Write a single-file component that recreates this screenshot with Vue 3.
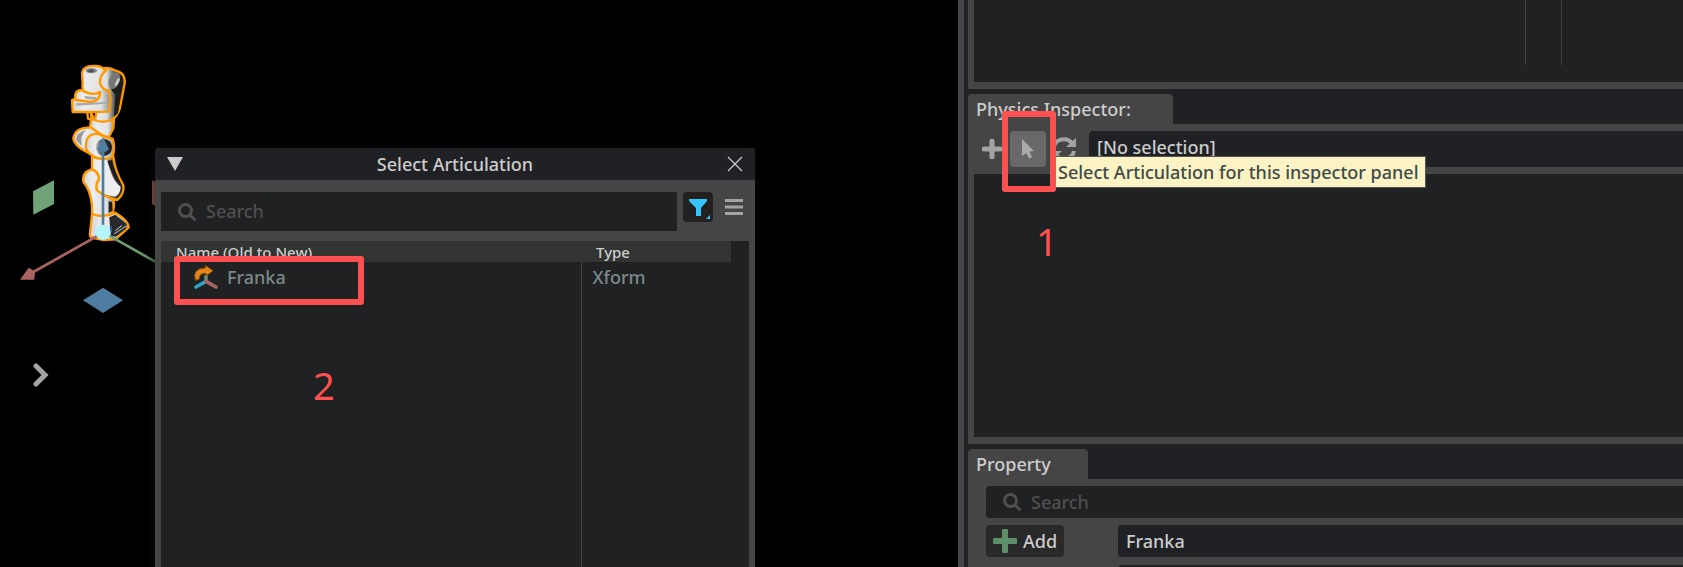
<template>
  <div class="app">
    <main class="viewport">
      <svg class="scene" viewBox="0 0 540 870" aria-hidden="true">
        <defs>
          <linearGradient id="shell" x1="0" x2="1">
            <stop offset="0" stop-color="#d4d4d4" />
            <stop offset="0.3" stop-color="#ececec" />
            <stop offset="0.75" stop-color="#e2e2e2" />
            <stop offset="1" stop-color="#8a8a8a" />
          </linearGradient>
          <linearGradient id="shade" x1="0" x2="1">
            <stop offset="0" stop-color="#eee" />
            <stop offset="0.4" stop-color="#ddd" />
            <stop offset="0.7" stop-color="#444" />
            <stop offset="1" stop-color="#151515" />
          </linearGradient>
          <linearGradient id="joint" x1="0" x2="1">
            <stop offset="0" stop-color="#b5b5b5" />
            <stop offset="0.5" stop-color="#333" />
            <stop offset="1" stop-color="#1a1a1a" />
          </linearGradient>
        </defs>

        <!-- robot arm, top to base -->
        <g stroke="#f90" stroke-width="7" stroke-linejoin="round" stroke-linecap="round">
          <path fill="url(#shade)" d="M298 88Q325 78 347 92Q376 98 374 130L362 192Q358 222 340 236L326 250L284 245L300 160Z" />
          <path fill="url(#shell)" d="M275 222L283 240Q312 252 342 236L340 265L326 292L296 282L270 264Z" />
          <path fill="url(#shell)" d="M318 92Q299 104 300 128Q304 148 326 152L332 172L328 215L264 216L218 216L216 180L226 176Q222 150 246 150L252 154Q246 148 248 130L246 98Q250 74 290 78Q308 80 318 92Z" />
          <path fill="none" d="M252 154Q280 168 300 156Q302 182 272 186L228 180M262 218L264 236L276 240L272 216" />
          <path fill="url(#shell)" d="M272 262Q224 262 220 296Q224 322 274 342L300 342L310 288Z" />
          <path fill="url(#shell)" d="M296 282Q262 278 258 310Q254 334 276 346Q306 366 338 352Q346 320 338 296Q316 294 296 282Z" />
          <path fill="url(#shade)" d="M276 350L276 388Q298 396 296 420Q284 432 290 450Q318 474 352 480Q374 460 370 436Q344 392 340 350Q310 364 276 350Z" />
          <path fill="url(#shell)" d="M276 388Q246 394 250 426Q272 450 276 498L276 522Q310 536 336 522Q346 496 340 478Q310 468 290 450Q286 432 296 420Q298 396 276 388Z" />
          <path fill="url(#shell)" d="M276 522L270 580Q266 592 282 594L312 600L346 598L386 562Q386 542 346 518Q310 536 276 522Z" />
        </g>
        <path fill="#eee" d="M284 362L322 360Q334 420 362 440Q362 460 346 470Q316 466 296 450Q292 436 301 422Q304 396 284 384Z" />
        <path fill="#1c1c1c" d="M344 100Q368 106 368 132L354 220L342 230L346 164L334 150Z" />
        <ellipse cx="343" cy="122" rx="16" ry="26" fill="#777" transform="rotate(20 343 122)" />
        <ellipse cx="352" cy="126" rx="4" ry="13" fill="#ccc" transform="rotate(28 352 126)" />
        <ellipse cx="274" cy="92" rx="17" ry="8" fill="#80858b" />
        <ellipse cx="273" cy="93" rx="9" ry="4" fill="#4a4d50" />
        <path fill="#aaa" d="M228 190L318 186L318 191L228 197ZM252 168L290 172L288 179L258 177Z" />
        <path fill="#999" d="M258 270Q230 276 228 300L246 318Q238 288 258 270Z" />
        <ellipse cx="312" cy="322" rx="24" ry="26" fill="url(#joint)" />
        <path fill="#1c1c1c" d="M322 362L336 360Q344 396 364 432L352 424Q334 400 322 362ZM326 484L336 486L338 512L326 518Z" />
        <path fill="#26282b" d="M328 532L346 524L380 552L378 566L348 590L332 588Z" />
        <path stroke="#999" stroke-width="4" fill="none" d="M342 582L378 558" />
        <path stroke="#ccc" stroke-width="3" fill="none" d="M346 572L366 556" />
        <path stroke="#2b56b8" stroke-width="4" d="M334 558V576" />

        <!-- transform gizmo -->
        <path stroke="#a96262" stroke-width="8" d="M292 588L100 696" />
        <path fill="#a96262" d="M60 719L86 683L105 694L103 719Z" />
        <path stroke="#6d9c74" stroke-width="8" d="M326 586L480 673" />
        <path stroke="#4f7ca1" stroke-width="8" d="M309 330V560" />
        <path fill="#4f7ca1" d="M309 291L327 328Q309 346 291 328Z" />
        <circle cx="309" cy="577" r="23" fill="#b5f4f8" />
        <path fill="#71a378" d="M99 454L162 421V492L100 524Z" />
        <path fill="#a96262" d="M456 421L480 434V505L456 492Z" />
        <path fill="#4f7ca1" d="M309 743L369 781L309 819L249 781Z" />
      </svg>

      <button class="expander" aria-label="Expand toolbar">
        <svg viewBox="0 0 16 24"><path d="M3 3L12 12L3 21" fill="none" stroke="#a3a3a3" stroke-width="5" stroke-linecap="round" /></svg>
      </button>

      <section class="dialog" role="dialog" aria-labelledby="dialog-title">
        <header class="title-bar">
          <button class="icon-btn" aria-label="Collapse">
            <svg width="16" height="14" viewBox="0 0 16 14"><path d="M0 0H16L8 14Z" fill="#ccc" /></svg>
          </button>
          <h1 id="dialog-title">Select Articulation</h1>
          <button class="icon-btn" aria-label="Close">
            <svg width="16" height="16" viewBox="0 0 16 16"><path d="M1 1L15 15M15 1L1 15" stroke="#ccc" stroke-width="1.2" /></svg>
          </button>
        </header>

        <div class="dialog-body">
          <div class="filter-row">
            <label class="search dialog-search">
              <svg viewBox="0 0 18 18"><circle cx="7.5" cy="7.5" r="6" /><path d="M12 12L16.500 16.500" /></svg>
              <input v-model="primSearch" type="text" placeholder="Search" aria-label="Search prims">
            </label>
            <button class="filter-btn" aria-label="Filter">
              <svg viewBox="0 0 30 30">
                <path d="M6 7H24V9L18 16V24H13V16L6 9Z" fill="#34c5ff" />
                <path d="M27 23V27H23Z" fill="#34c5ff" />
              </svg>
            </button>
            <button class="icon-btn" aria-label="Options">
              <svg width="18" height="16" viewBox="0 0 18 16"><path d="M0 0H18V3H0ZM0 6.500H18V9.500H0ZM0 13H18V16H0Z" fill="#a3a3a3" /></svg>
            </button>
          </div>

          <div class="table-wrap">
            <table>
              <thead>
                <tr>
                  <th class="name-col">Name (Old to New)</th>
                  <th>Type</th>
                </tr>
              </thead>
              <tbody>
                <tr v-for="prim in filteredPrims" :key="prim.name" class="prim-row">
                  <td class="name-col">
                    <div class="prim-name">
                      <svg viewBox="0 0 72 72">
                        <path d="M36 49V30" stroke="#6d9c74" stroke-width="10" />
                        <path d="M36 49L6 66" stroke="#2fa3c2" stroke-width="11" stroke-linecap="round" />
                        <path d="M36 49L66 66" stroke="#a96262" stroke-width="11" stroke-linecap="round" />
                        <path d="M4 46Q-6 10 34 9V1L57 17L36 33V25Q16 23 15 43Z" fill="#e5861a" stroke="#8a4b08" stroke-width="3" />
                      </svg>
                      {{ prim.name }}
                    </div>
                    <span class="marker marker-row"></span>
                    <span class="step step-two">2</span>
                  </td>
                  <td>{{ prim.type }}</td>
                </tr>
                <tr>
                  <td></td>
                  <td></td>
                </tr>
              </tbody>
            </table>
          </div>
        </div>
      </section>
    </main>

    <aside class="sidebar">
      <section class="panel stage">
        <div class="stage-view">
          <span class="stage-line"></span>
          <span class="stage-line"></span>
        </div>
      </section>

      <section class="panel-group inspector">
        <h2 class="tab tab-wide">Physics Inspector:</h2>
        <div class="panel inspector-panel">
          <div class="toolbar">
            <button class="tool-btn" aria-label="Add inspector">
              <svg width="20" height="20" viewBox="0 0 20 20"><path d="M10 2V18M2 10H18" stroke="#a3a3a3" stroke-width="5" stroke-linecap="round" /></svg>
            </button>
            <div class="picker">
              <button class="tool-btn active" aria-describedby="picker-tip" aria-label="Select articulation">
                <svg width="14" height="20" viewBox="0 0 14 20"><path d="M1 0L13 12L8.500 12.500L11 18L8 19.500L5.500 14L1 17Z" fill="#aaa" /></svg>
              </button>
              <span id="picker-tip" class="tooltip" role="tooltip">Select Articulation for this inspector panel</span>
              <span class="marker marker-tool"></span>
              <span class="step step-one">1</span>
            </div>
            <button class="tool-btn" aria-label="Refresh">
              <svg width="24" height="24" viewBox="0 0 24 24">
                <path d="M2 10A10 9 0 0 1 20 6M22 14A10 9 0 0 1 4 18" fill="none" stroke="#a3a3a3" stroke-width="4" />
                <path d="M24 1V10H14ZM0 23V14H10Z" fill="#a3a3a3" />
              </svg>
            </button>
            <input v-model="selection" class="field selection" type="text" aria-label="Selection">
          </div>
          <div class="inspector-view"></div>
        </div>
      </section>

      <section class="panel-group property">
        <h2 class="tab">Property</h2>
        <div class="panel property-panel">
          <label class="search property-search">
            <svg viewBox="0 0 18 18"><circle cx="7.5" cy="7.5" r="6" /><path d="M12 12L16.500 16.500" /></svg>
            <input v-model="propertySearch" type="text" placeholder="Search" aria-label="Search properties">
          </label>
          <div class="property-grid">
            <button class="add-btn">
              <svg width="24" height="24" viewBox="0 0 24 24"><path d="M10 0H14Q15 0 15 1V9H23Q24 9 24 10V14Q24 15 23 15H15V23Q15 24 14 24H10Q9 24 9 23V15H1Q0 15 0 14V10Q0 9 1 9H9V1Q9 0 10 0Z" fill="#5f8f68" /></svg>
              Add
            </button>
            <input v-model="primName" class="field" type="text" aria-label="Prim name">
            <input v-model="primPath" class="field path-field" type="text" aria-label="Prim path">
          </div>
        </div>
      </section>
    </aside>
  </div>
</template>

<script setup>
import { computed, ref } from 'vue'

const prims = [{ name: 'Franka', type: 'Xform' }]

const primSearch = ref('')
const propertySearch = ref('')
const selection = ref('[No selection]')
const primName = ref('Franka')
const primPath = ref('')

const filteredPrims = computed(() =>
  prims.filter((prim) => prim.name.toLowerCase().includes(primSearch.value.toLowerCase()))
)
</script>

<style>
body {
  margin: 0;
  background: #000;
}
</style>

<style scoped>
* {
  box-sizing: border-box;
}
.app {
  display: grid;
  grid-template-columns: 958fr 725fr;
  height: 100vh;
  overflow: hidden;
  color: #ccc;
  font: 500 18px/24px "Noto Sans", sans-serif;
}
button,
input {
  margin: 0;
  padding: 0;
  border: 0;
  background: none;
  color: inherit;
  font: inherit;
}
input {
  min-width: 0;
  outline: none;
}
svg {
  display: block;
  flex: none;
}
h1,
h2 {
  margin: 0;
  font: inherit;
}

/* Viewport */
.viewport {
  position: relative;
  background: #000;
}
.scene {
  position: absolute;
  top: 40px;
  left: 0;
  width: 180px;
  height: 290px;
}
.expander {
  position: absolute;
  top: 363px;
  left: 33px;
}
.expander svg {
  width: 16px;
  height: 24px;
}

/* Select Articulation window */
.dialog {
  position: absolute;
  top: 148px;
  bottom: 0;
  left: 155px;
  display: flex;
  flex-direction: column;
  width: 600px;
  border-radius: 4px 4px 0 0;
  background: #454545;
  box-shadow: 0 0 16px #0a0a0a;
}
.title-bar {
  display: flex;
  align-items: center;
  justify-content: space-between;
  height: 32px;
  padding: 0 12px;
  border-radius: 4px 4px 0 0;
  background: #202125;
}
.dialog-body {
  flex: 1;
  display: flex;
  flex-direction: column;
  gap: 10px;
  padding: 12px 6px 0;
}
.filter-row {
  display: flex;
  align-items: flex-start;
  gap: 6px;
}
.filter-row .icon-btn {
  padding: 7px 6px;
}
.search {
  display: flex;
  align-items: center;
  gap: 10px;
  padding: 0 17px;
  background: #202123;
}
.search svg {
  width: 18px;
  height: 18px;
  fill: none;
  stroke: #4f4f4f;
  stroke-width: 3;
  stroke-linecap: round;
}
.search input {
  flex: 1;
}
.search input::placeholder {
  color: #4f4f4f;
  opacity: 1;
}
.dialog-search {
  flex: 1;
  height: 39px;
}
.dialog-search input {
  padding-bottom: 2px;
}
.filter-btn {
  border-radius: 4px;
  background: #22211f;
}
.filter-btn svg {
  width: 30px;
  height: 30px;
}
.table-wrap {
  flex: 1;
  padding-right: 18px;
  background: #202123;
}
table {
  width: 100%;
  height: 100%;
  table-layout: fixed;
  border-collapse: collapse;
  text-align: left;
}
th {
  height: 21px;
  padding: 1px 0 0 15px;
  background: #323432;
  font-size: 15px;
  font-weight: 500;
  line-height: 20px;
}
th.name-col {
  width: 420px;
}
td {
  position: relative;
  padding: 0 0 0 11px;
  color: #7b8989;
}
td + td {
  border-left: 1px solid #454545;
}
.prim-row {
  height: 30px;
}
.prim-name {
  display: flex;
  align-items: center;
  gap: 9px;
  padding-left: 22px;
}
.prim-name svg {
  width: 24px;
  height: 24px;
}

/* Walkthrough marks */
.marker {
  position: absolute;
  border: 6px solid #ff5050;
  border-radius: 3px;
  pointer-events: none;
}
.marker-row {
  top: -6px;
  left: 13px;
  width: 190px;
  height: 49px;
}
.marker-tool {
  top: -20px;
  left: -8px;
  width: 54px;
  height: 81px;
}
.step {
  position: absolute;
  color: #ff5050;
  font: 400 38px/48px "Noto Sans", sans-serif;
}
.step-one {
  top: 86px;
  left: 26px;
}
.step-two {
  top: 99px;
  left: 152px;
}

/* Docked panels */
.sidebar {
  display: flex;
  flex-direction: column;
  gap: 5px;
  min-width: 0;
  padding-left: 4px;
  border-left: 6px solid #454545;
  background: #202125;
}
.panel {
  padding-left: 6px;
  background: #454545;
}
.stage {
  padding-bottom: 7px;
}
.stage-view {
  display: flex;
  justify-content: flex-end;
  gap: 35px;
  height: 82px;
  padding: 0 121px 17px 0;
  background: #202123;
}
.stage-line {
  width: 1px;
  background: #454545;
}
.panel-group {
  display: flex;
  flex-direction: column;
}
.tab {
  align-self: flex-start;
  width: 120px;
  height: 30px;
  padding-left: 8px;
  border-radius: 4px 4px 0 0;
  background: #454545;
  line-height: 30px;
}
.tab-wide {
  width: 205px;
}
.inspector-panel {
  padding-top: 7px;
  padding-bottom: 7px;
}
.toolbar {
  display: flex;
  align-items: center;
  height: 36px;
}
.tool-btn {
  display: flex;
  align-items: center;
  justify-content: center;
  width: 36px;
  height: 36px;
  border-radius: 4px;
}
.tool-btn.active {
  background: #686868;
}
.picker {
  position: relative;
  z-index: 1;
}
.tooltip {
  position: absolute;
  top: 25px;
  left: 45px;
  padding: 4px 6px 3px 2px;
  border: 1px solid #56564e;
  background: #fbf3c4;
  color: #3f4a4a;
  line-height: 23px;
  white-space: nowrap;
}
.field {
  height: 32px;
  padding-left: 8px;
  border-radius: 4px 0 0 4px;
  background: #202125;
}
.selection {
  flex: 1;
  height: 36px;
  margin-left: 7px;
  padding-bottom: 4px;
}
.inspector-view {
  height: 263px;
  margin-top: 7px;
  background: #202123;
}
.property {
  flex: 1;
}
.property-panel {
  flex: 1;
  padding: 7px 0 0 18px;
}
.property-search {
  height: 32px;
  border-radius: 4px 0 0 4px;
}
.property-grid {
  display: grid;
  grid-template-columns: 78px 1fr;
  gap: 8px 54px;
  padding-top: 7px;
}
.add-btn {
  display: flex;
  align-items: center;
  gap: 6px;
  height: 32px;
  padding-left: 7px;
  border-radius: 4px;
  background: #292929;
}
.path-field {
  grid-column: 2;
}
</style>
